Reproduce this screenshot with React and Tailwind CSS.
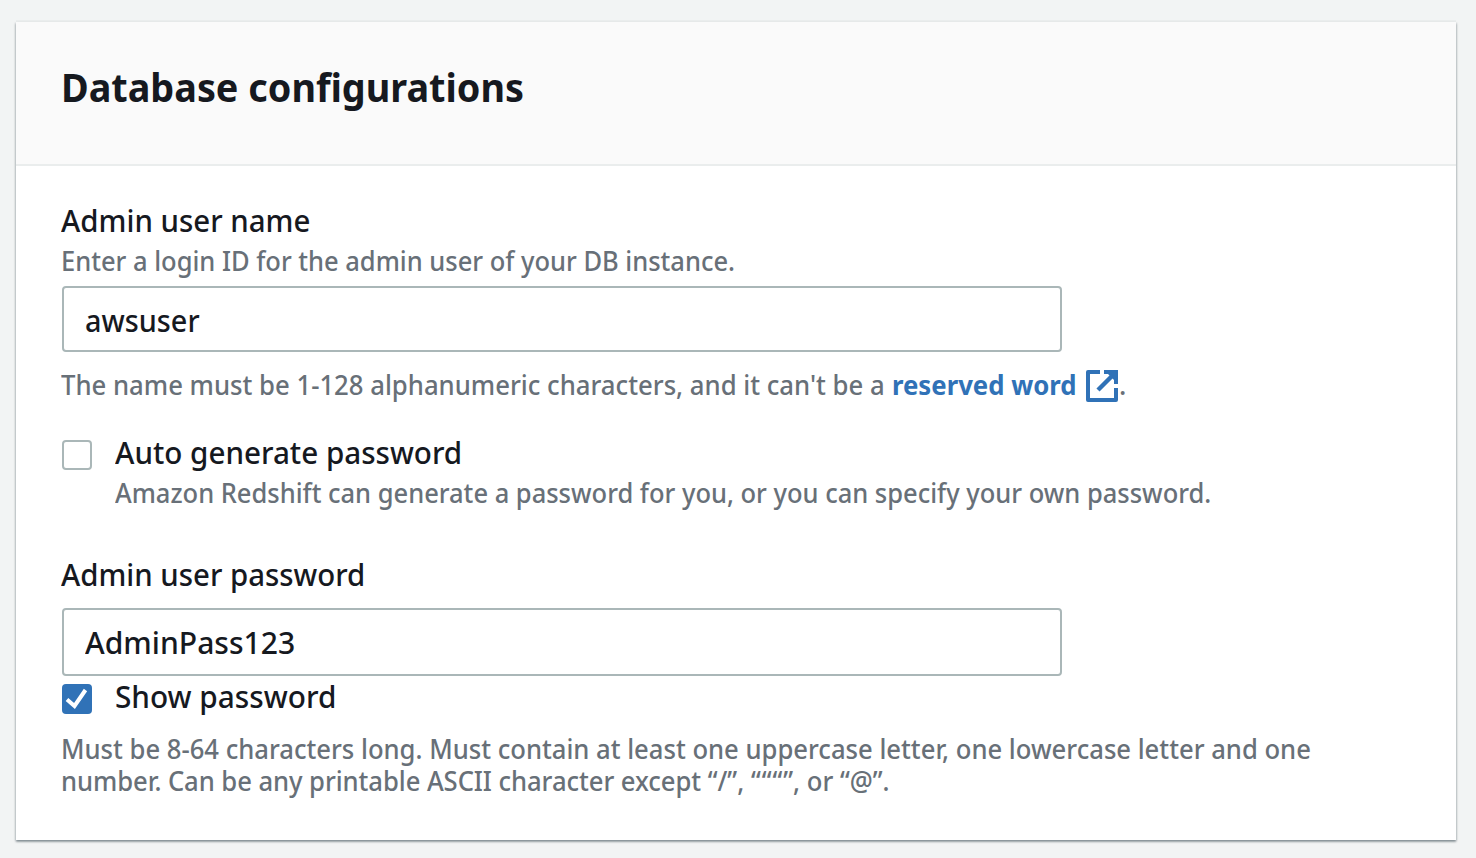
import React from "react";

function Label({ children, className = "" }) {
  return <div className={"h-10 origin-left text-[31px] leading-10 font-medium whitespace-nowrap text-[#16191f] " + className}>{children}</div>;
}

function Hint({ children, className = "" }) {
  return <p className={"origin-left text-[27px] leading-8 font-medium whitespace-nowrap text-[#687078] " + className}>{children}</p>;
}

function Field({ defaultValue, label, className = "", inputClass = "" }) {
  return (
    <div className={"w-[1000px] rounded-[4px] border-2 border-[#aab7b8] bg-white px-[21px] " + className}>
      <input
        aria-label={label}
        defaultValue={defaultValue}
        className={"block h-full w-full origin-left bg-transparent text-[31px] font-medium text-[#16191f] outline-none " + inputClass}
      />
    </div>
  );
}

function ExternalIcon() {
  return (
    <svg viewBox="0 0 32 32" className="mt-0.5 block size-8 shrink-0" fill="none" stroke="#3072b7" strokeWidth="4">
      <path d="M14 2H2v28h28V18" strokeLinejoin="round" />
      <path d="M18 2h12v12" />
      <path d="M30 2 12 20" strokeWidth="4.5" />
      <path d="M22 4h6v6Z" fill="#3072b7" stroke="none" />
    </svg>
  );
}

export default function App() {
  return (
    <div className="h-[858px] w-[1476px] overflow-hidden bg-[#f2f4f4] pt-[22px] pl-4 font-['Noto_Sans','Open_Sans',sans-serif]">
      <section className="h-[818px] w-[1440px] bg-white shadow-[0_2px_2px_0_rgba(0,28,36,0.3),1px_1px_2px_0_rgba(0,28,36,0.15),-1px_1px_2px_0_rgba(0,28,36,0.15),0_-2px_0_0_#eaeded]">
        <header className="h-36 border-b-2 border-[#eaeded] bg-[#fafafa] pt-[37px] pl-[45px]">
          <h2 className="origin-left scale-x-[0.945] text-[40px] leading-[56px] font-bold whitespace-nowrap text-[#16191f]">Database configurations</h2>
        </header>
        <div className="flex flex-col pt-[34px] pl-[46px]">
          <Label className="-ml-px scale-x-[0.95]">Admin user name</Label>
          <Hint className="mt-[5px] -ml-px scale-x-[0.944]">Enter a login ID for the admin user of your DB instance.</Hint>
          <Field label="Admin user name" defaultValue="awsuser" className="mt-[9px] h-[66px] pt-[2px]" inputClass="scale-x-[0.93]" />
          <div className="mt-[17px] -ml-px flex h-8 items-center">
            <Hint className="w-[831px] scale-x-[0.952]">The name must be 1-128 alphanumeric characters, and it can't be a</Hint>
            <a className="w-[194px] origin-left scale-x-[0.953] text-[27px] leading-8 font-bold whitespace-nowrap text-[#3072b7]">reserved word</a>
            <ExternalIcon />
            <Hint className="ml-px">.</Hint>
          </div>
          <div className="mt-[31px] flex">
            <span className="mt-2 size-[30px] shrink-0 rounded-[4px] border-2 border-[#aab7b8] bg-white" />
            <div className="ml-[23px]">
              <Label className="scale-x-[0.955]">Auto generate password</Label>
              <Hint className="mt-[5px] scale-x-[0.944]">Amazon Redshift can generate a password for you, or you can specify your own password.</Hint>
            </div>
          </div>
          <Label className="mt-[45px] -ml-px scale-x-[0.948]">Admin user password</Label>
          <Field label="Admin user password" defaultValue="AdminPass123" className="mt-3.5 h-[68px]" inputClass="scale-x-[0.97]" />
          <div className="flex">
            <span className="mt-2 size-[30px] shrink-0 rounded-[4px] bg-[#3072b7]">
              <svg viewBox="0 0 30 30" className="block size-full" fill="none" stroke="#fff" strokeWidth="4">
                <path d="m5 15.5 7.5 6.5L23.5 6" />
              </svg>
            </span>
            <Label className="ml-[23px] scale-x-[0.96]">Show password</Label>
          </div>
          <Hint className="mt-[17px] -ml-px scale-x-[0.949]">
            Must be 8-64 characters long. Must contain at least one uppercase letter, one lowercase letter and one
            <br />
            <span className="tracking-[-0.06px]">number. Can be any printable ASCII character except </span>
            <span className="[font-kerning:none]">“/”, <span className="tracking-[1px]">“““</span>”, or “@”.</span>
          </Hint>
        </div>
      </section>
    </div>
  );
}
